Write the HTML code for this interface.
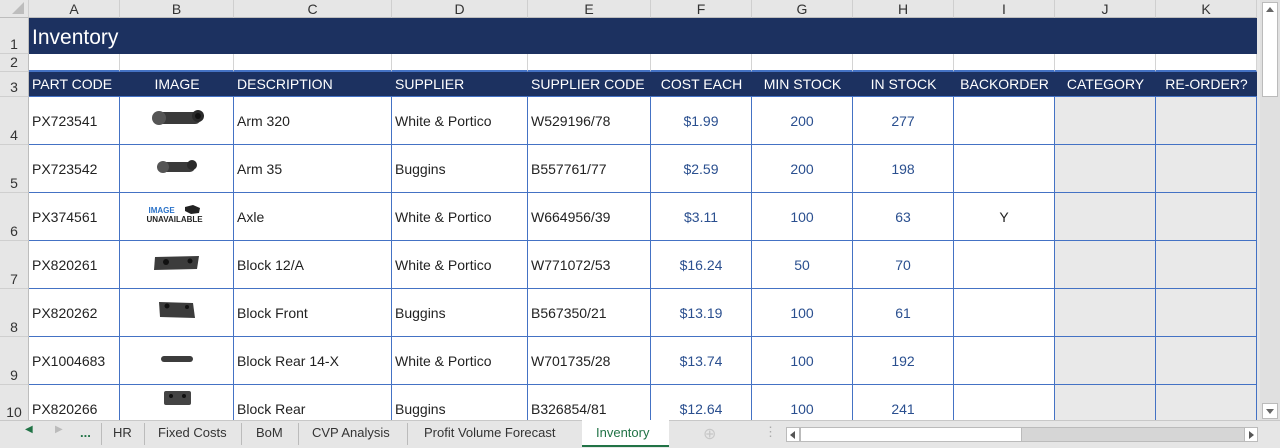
<!DOCTYPE html>
<html><head><meta charset="utf-8"><style>
*{margin:0;padding:0;box-sizing:border-box}
body{width:1280px;height:448px;overflow:hidden;background:#e6e6e6;font-family:"Liberation Sans",sans-serif;position:relative}
table{position:absolute;left:0;top:0;border-collapse:separate;border-spacing:0;table-layout:fixed;width:1257px}
td{font-size:14px;color:#222;white-space:nowrap;overflow:hidden;padding:0 3px;vertical-align:middle;border:none}
tr.ch td{background:#e6e6e6;text-align:center;border-right:1px solid #cfcfcf;border-bottom:1px solid #bdbdbd;color:#333;font-size:14px;height:18px;padding:0}
td.rh{background:#e6e6e6;border-right:1px solid #bdbdbd;border-bottom:1px solid #cfcfcf;text-align:center;vertical-align:bottom;color:#333;font-size:14px;padding:0 0 1px 0}
tr.r1 td.n{background:#1c3160;color:#fff;font-size:21px;padding-top:4px}
tr.r2 td.n{background:#fff;border-right:1px solid #d4d4d4;border-bottom:2px solid #4472c4}
tr.r3 td.n{background:#1c3160;color:#fff;border-bottom:1px solid #4472c4;padding:0 3px;font-size:14px}
tr.d td.n{background:#fff;border-right:1px solid #4472c4;border-bottom:1px solid #4472c4}
tr.d td.g{background:#e9e9e9}
.c{text-align:center}
.b{color:#2a4f8f!important;text-align:center}
.tabs{position:absolute;left:0;top:420px;width:1280px;height:28px;background:#e6e6e6;border-top:1px solid #c8c8c8;font-size:13px;color:#333}
.tabs span{position:absolute;top:4px}
.sep{position:absolute;top:2px;width:1px;height:22px;background:#bbb}
.t td.n{vertical-align:top;padding-top:16px}
</style></head><body>
<table>
<colgroup><col style="width:29px"><col style="width:91px"><col style="width:114px"><col style="width:158px"><col style="width:136px"><col style="width:123px"><col style="width:101px"><col style="width:101px"><col style="width:101px"><col style="width:101px"><col style="width:101px"><col style="width:101px"></colgroup>
<tr class="ch"><td style="position:relative"><svg width="14" height="14" style="position:absolute;right:3px;bottom:2px"><path d="M13 1 L13 13 L1 13 Z" fill="#bdbdbd"/></svg></td><td>A</td><td>B</td><td>C</td><td>D</td><td>E</td><td>F</td><td>G</td><td>H</td><td>I</td><td>J</td><td>K</td></tr>
<tr class="r1" style="height:36px"><td class="rh">1</td><td class="n" colspan="11">Inventory</td></tr>
<tr class="r2" style="height:18px"><td class="rh">2</td><td class="n"></td><td class="n"></td><td class="n"></td><td class="n"></td><td class="n"></td><td class="n"></td><td class="n"></td><td class="n"></td><td class="n"></td><td class="n"></td><td class="n"></td></tr>
<tr class="r3" style="height:25px"><td class="rh">3</td><td class="n">PART CODE</td><td class="n c">IMAGE</td><td class="n">DESCRIPTION</td><td class="n">SUPPLIER</td><td class="n">SUPPLIER CODE</td><td class="n c">COST EACH</td><td class="n c">MIN STOCK</td><td class="n c">IN STOCK</td><td class="n c">BACKORDER</td><td class="n c">CATEGORY</td><td class="n c">RE-ORDER?</td></tr>
<tr class="d" style="height:48px"><td class="rh">4</td><td class="n">PX723541</td><td class="n c"><svg width="60" height="22"><rect x="6" y="4" width="48" height="12" rx="6" fill="#3a3a3a"/><circle cx="12" cy="10" r="7" fill="#555"/><circle cx="51" cy="8" r="6" fill="#2a2a2a"/><circle cx="51" cy="8" r="3" fill="#111"/></svg></td><td class="n">Arm 320</td><td class="n">White &amp; Portico</td><td class="n">W529196/78</td><td class="n b">$1.99</td><td class="n b">200</td><td class="n b">277</td><td class="n c"></td><td class="n g"></td><td class="n g"></td></tr>
<tr class="d" style="height:48px"><td class="rh">5</td><td class="n">PX723542</td><td class="n c"><svg width="60" height="22"><rect x="12" y="6" width="36" height="10" rx="5" fill="#3a3a3a"/><circle cx="16" cy="11" r="6" fill="#555"/><circle cx="45" cy="9" r="5" fill="#2a2a2a"/></svg></td><td class="n">Arm 35</td><td class="n">Buggins</td><td class="n">B557761/77</td><td class="n b">$2.59</td><td class="n b">200</td><td class="n b">198</td><td class="n c"></td><td class="n g"></td><td class="n g"></td></tr>
<tr class="d" style="height:48px"><td class="rh">6</td><td class="n">PX374561</td><td class="n c"><div style="display:inline-block;position:relative;width:64px;height:22px;font-weight:bold;font-size:8px;line-height:9px;text-align:left"><span style="position:absolute;left:4px;top:2px;color:#2a72c8">IMAGE</span><svg style="position:absolute;left:38px;top:0" width="18" height="11"><path d="M2 3 L10 1 L17 4 L16 9 L8 10 L2 7Z" fill="#222"/></svg><span style="position:absolute;left:2px;top:11px;color:#222">UNAVAILABLE</span></div></td><td class="n">Axle</td><td class="n">White &amp; Portico</td><td class="n">W664956/39</td><td class="n b">$3.11</td><td class="n b">100</td><td class="n b">63</td><td class="n c">Y</td><td class="n g"></td><td class="n g"></td></tr>
<tr class="d" style="height:48px"><td class="rh">7</td><td class="n">PX820261</td><td class="n c"><svg width="60" height="22"><path d="M8 5 L52 4 L50 17 L7 18Z" fill="#3c3c3c"/><circle cx="19" cy="10" r="3" fill="#111"/><circle cx="43" cy="9" r="2.5" fill="#111"/></svg></td><td class="n">Block 12/A</td><td class="n">White &amp; Portico</td><td class="n">W771072/53</td><td class="n b">$16.24</td><td class="n b">50</td><td class="n b">70</td><td class="n c"></td><td class="n g"></td><td class="n g"></td></tr>
<tr class="d" style="height:48px"><td class="rh">8</td><td class="n">PX820262</td><td class="n c"><svg width="60" height="22"><path d="M12 2 L46 3 L48 18 L13 17Z" fill="#3c3c3c"/><circle cx="20" cy="6" r="2.5" fill="#111"/><circle cx="40" cy="7" r="2" fill="#111"/></svg></td><td class="n">Block Front</td><td class="n">Buggins</td><td class="n">B567350/21</td><td class="n b">$13.19</td><td class="n b">100</td><td class="n b">61</td><td class="n c"></td><td class="n g"></td><td class="n g"></td></tr>
<tr class="d" style="height:48px"><td class="rh">9</td><td class="n">PX1004683</td><td class="n c"><svg width="60" height="22"><rect x="14" y="8" width="32" height="6" rx="3" fill="#3c3c3c"/></svg></td><td class="n">Block Rear 14-X</td><td class="n">White &amp; Portico</td><td class="n">W701735/28</td><td class="n b">$13.74</td><td class="n b">100</td><td class="n b">192</td><td class="n c"></td><td class="n g"></td><td class="n g"></td></tr>
<tr class="d t" style="height:35px"><td class="rh" style="vertical-align:top;padding-top:19px">10</td><td class="n">PX820266</td><td class="n c" style="padding-top:4px"><svg width="60" height="18"><rect x="17" y="2" width="27" height="14" rx="2" fill="#444"/><circle cx="24" cy="7" r="2" fill="#111"/><circle cx="37" cy="7" r="2" fill="#111"/></svg></td><td class="n">Block Rear</td><td class="n">Buggins</td><td class="n">B326854/81</td><td class="n b">$12.64</td><td class="n b">100</td><td class="n b">241</td><td class="n"></td><td class="n g"></td><td class="n g"></td></tr>
</table>
<div style="position:absolute;left:1260px;top:0;width:20px;height:420px;background:#e0e0e0">
<div style="position:absolute;left:2px;top:2px;width:16px;height:95px;background:#fff;border:1px solid #bbb"></div>
<svg style="position:absolute;left:6px;top:7px" width="8" height="5"><path d="M0 5 L4 0 L8 5Z" fill="#666"/></svg>
<div style="position:absolute;left:2px;top:403px;width:16px;height:16px;background:#fff;border:1px solid #bbb"></div>
<svg style="position:absolute;left:6px;top:409px" width="8" height="5"><path d="M0 0 L4 5 L8 0Z" fill="#666"/></svg>
</div>
<div class="tabs">
<span style="left:25px;top:3px;color:#217346;font-size:10px">◀</span>
<span style="left:55px;top:3px;color:#bbb;font-size:10px">▶</span>
<span style="left:80px;color:#217346;font-weight:bold">...</span>
<div class="sep" style="left:101px"></div>
<span style="left:113px">HR</span>
<div class="sep" style="left:144px"></div>
<span style="left:158px">Fixed Costs</span>
<div class="sep" style="left:241px"></div>
<span style="left:256px">BoM</span>
<div class="sep" style="left:298px"></div>
<span style="left:312px">CVP Analysis</span>
<div class="sep" style="left:407px"></div>
<span style="left:424px">Profit Volume Forecast</span>
<div style="position:absolute;left:582px;top:-1px;width:87px;height:27px;background:#fff;border-bottom:2px solid #217346"></div>
<span style="left:596px;color:#217346">Inventory</span>
<span style="left:703px;top:3px;color:#c8c8c8;font-size:16px">⊕</span>
<span style="left:764px;top:3px;color:#aaa">⋮</span>
<div style="position:absolute;left:786px;top:6px;width:472px;height:15px;background:#d6d6d6;border:1px solid #bbb"></div>
<div style="position:absolute;left:786px;top:6px;width:14px;height:15px;background:#fff;border:1px solid #bbb"></div>
<div style="position:absolute;left:800px;top:6px;width:222px;height:15px;background:#fff;border:1px solid #bbb"></div>
<div style="position:absolute;left:1244px;top:6px;width:14px;height:15px;background:#fff;border:1px solid #bbb"></div>
<svg style="position:absolute;left:790px;top:10px" width="5" height="8"><path d="M5 0 L0 4 L5 8Z" fill="#555"/></svg>
<svg style="position:absolute;left:1249px;top:10px" width="5" height="8"><path d="M0 0 L5 4 L0 8Z" fill="#555"/></svg>
</div>
</body></html>
